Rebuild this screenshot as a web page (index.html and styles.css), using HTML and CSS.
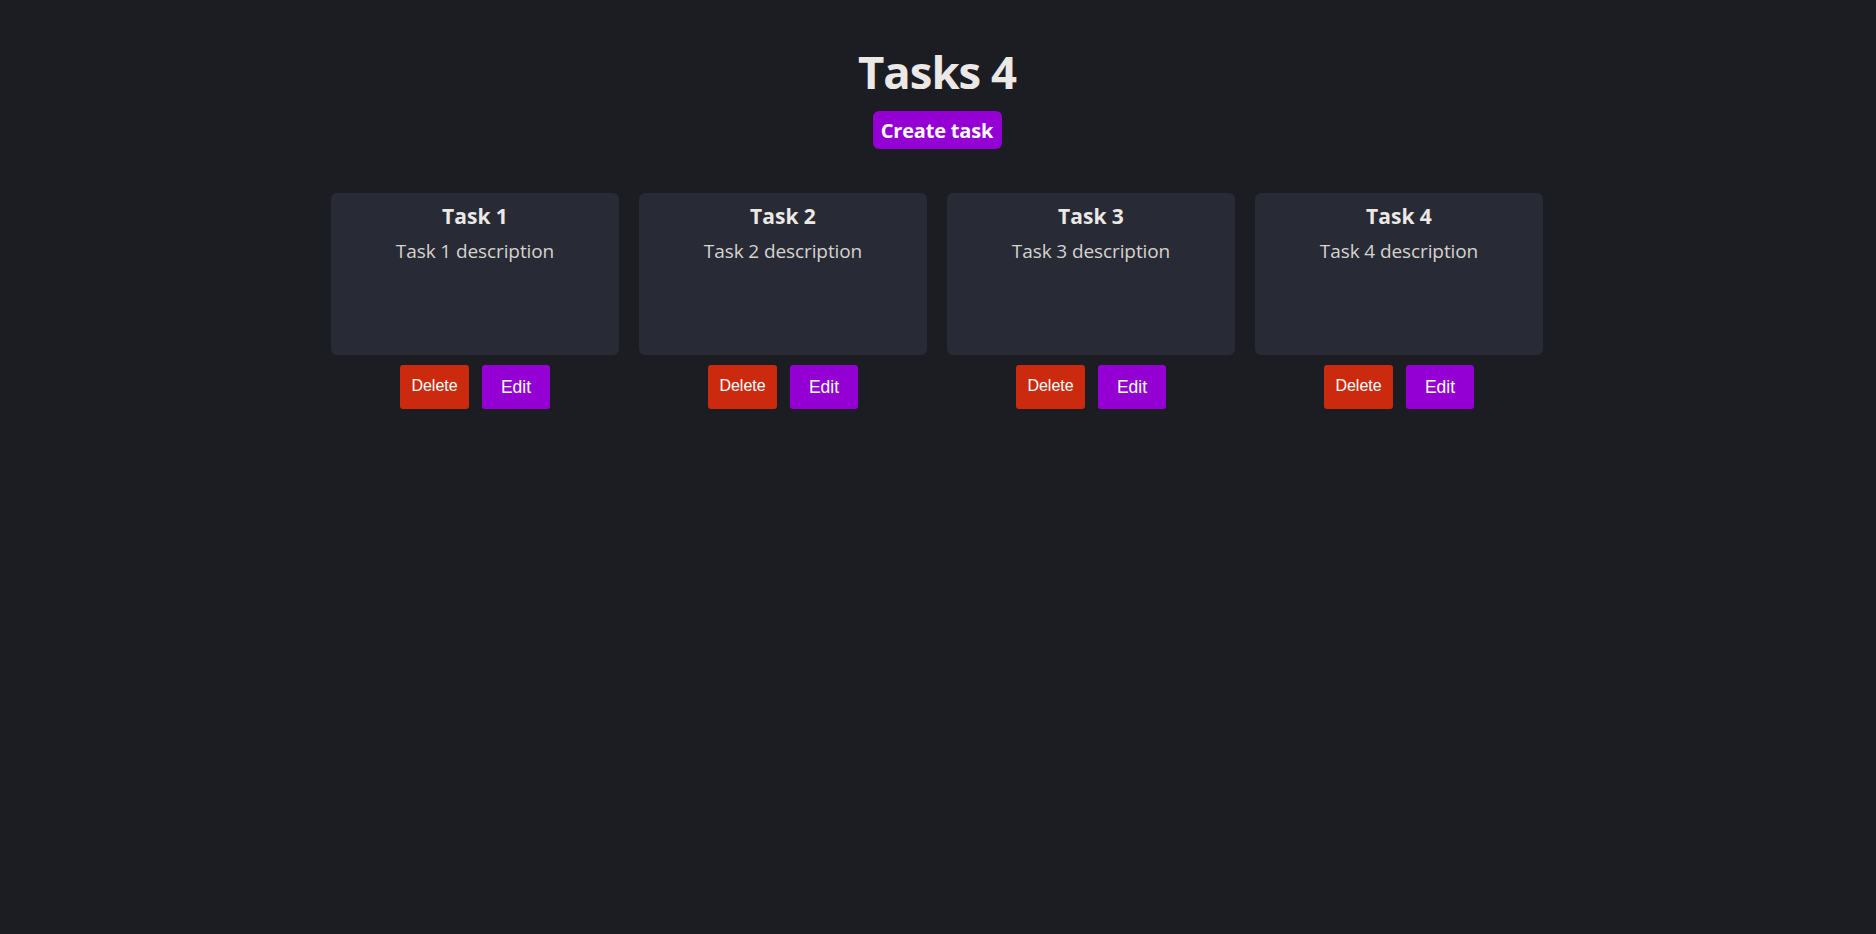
FILE: index.html
```html
<!DOCTYPE html>
<html lang="en">
<head>
<meta charset="utf-8">
<title>Tasks</title>
<link rel="stylesheet" href="styles.css">
</head>
<body>
<main class="app">
  <h1 class="title">Tasks 4</h1>
  <button class="create-btn">Create task</button>
  <section class="task-list">
    <div class="task">
      <div class="task-card">
        <h2 class="task-title">Task 1</h2>
        <p class="task-desc">Task 1 description</p>
      </div>
      <div class="task-actions">
        <button class="btn btn-delete">Delete</button>
        <button class="btn btn-edit">Edit</button>
      </div>
    </div>
    <div class="task">
      <div class="task-card">
        <h2 class="task-title">Task 2</h2>
        <p class="task-desc">Task 2 description</p>
      </div>
      <div class="task-actions">
        <button class="btn btn-delete">Delete</button>
        <button class="btn btn-edit">Edit</button>
      </div>
    </div>
    <div class="task">
      <div class="task-card">
        <h2 class="task-title">Task 3</h2>
        <p class="task-desc">Task 3 description</p>
      </div>
      <div class="task-actions">
        <button class="btn btn-delete">Delete</button>
        <button class="btn btn-edit">Edit</button>
      </div>
    </div>
    <div class="task">
      <div class="task-card">
        <h2 class="task-title">Task 4</h2>
        <p class="task-desc">Task 4 description</p>
      </div>
      <div class="task-actions">
        <button class="btn btn-delete">Delete</button>
        <button class="btn btn-edit">Edit</button>
      </div>
    </div>
  </section>
</main>
</body>
</html>
```
FILE: styles.css
```css
html, body {
  margin: 0;
  padding: 0;
  background: #1b1d22;
  min-height: 100%;
}

body {
  font-family: "Open Sans", "Noto Sans", sans-serif;
  color: #e8e6e3;
  height: 934px;
}

.app {
  display: flex;
  flex-direction: column;
  align-items: center;
  padding-top: 41px;
  padding-right: 2px;
}

.title {
  margin: 0;
  font-size: 45.5px;
  font-weight: 700;
  line-height: 60px;
  letter-spacing: -1px;
  color: #ebe8e6;
}

.create-btn {
  margin-top: 10px;
  height: 38px;
  width: 129px;
  padding: 0;
  border: none;
  border-radius: 6px;
  background: #9400d3;
  color: #ffffff;
  font-family: "Open Sans", "Noto Sans", sans-serif;
  font-size: 20px;
  font-weight: 700;
  letter-spacing: -0.2px;
}

.task-list {
  margin-top: 44px;
  display: flex;
  gap: 20px;
}

.task {
  width: 288px;
  display: flex;
  flex-direction: column;
  align-items: center;
}

.task-card {
  box-sizing: border-box;
  width: 288px;
  height: 162px;
  background: #282b35;
  border-radius: 6px;
  padding-top: 9px;
  text-align: center;
}

.task-title {
  margin: 0;
  font-size: 21px;
  font-weight: 700;
  line-height: 28px;
  color: #ebe8e6;
}

.task-desc {
  margin: 8px 0 0;
  font-size: 19px;
  line-height: 26px;
  color: #d6d3ce;
  letter-spacing: -0.1px;
}

.task-actions {
  margin-top: 10px;
  display: flex;
  gap: 13px;
}

.btn {
  height: 44px;
  border: none;
  border-radius: 3px;
  color: #ffffff;
  font-family: "Liberation Sans", Arial, sans-serif;
  padding: 0;
}

.btn-delete {
  width: 69px;
  background: #cc2a0e;
  font-size: 16px;
  padding-bottom: 2px;
}

.btn-edit {
  width: 68px;
  background: #9400d3;
  font-size: 17.5px;
}
```
